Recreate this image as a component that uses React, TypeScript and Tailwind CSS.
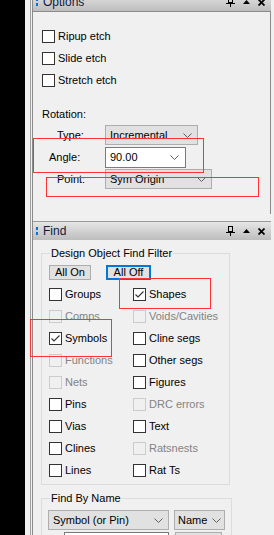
import React from 'react';

const font = { fontFamily: '"Liberation Sans", Arial, sans-serif' };

const Chevron = () => (
  <svg width="9" height="5" viewBox="0 0 9 5" className="shrink-0">
    <polyline points="0.5,0.5 4.5,4.5 8.5,0.5" fill="none" stroke="#606060" strokeWidth="1" />
  </svg>
);

const CheckBox = ({ label, checked, disabled }: { label: string; checked?: boolean; disabled?: boolean }) => (
  <div className="flex items-center h-[22px]">
    <span
      className={`w-[13px] h-[13px] border flex items-center justify-center shrink-0 ${
        disabled ? 'border-[#cccccc] bg-[#f0f0f0]' : 'border-[#333333] bg-white'
      }`}
    >
      {checked && (
        <svg width="11" height="11" viewBox="0 0 11 11">
          <polyline points="1.5,5.5 4,8 9.5,2.5" fill="none" stroke="#333333" strokeWidth="1.1" />
        </svg>
      )}
    </span>
    <span className={`ml-[3px] text-[11px] ${disabled ? 'text-[#838383]' : 'text-black'}`}>{label}</span>
  </div>
);

const Dropdown = ({ text, width }: { text: string; width: string }) => (
  <div className={`${width} h-[20px] shrink-0 bg-[#e1e1e1] border border-[#adadad] flex items-center justify-between pl-[4px] pr-[5px] text-[11px] text-black`}>
    <span>{text}</span>
    <Chevron />
  </div>
);

const TitleBar = ({ title, options }: { title: string; options?: boolean }) => (
  <div
    className={`h-[19px] w-[238px] shrink-0 border-t border-[#9a9a9a] bg-gradient-to-b from-[#e6e6e6] to-[#bdbdbd] flex items-center pl-[3px] pr-[6px] ${
      options ? '-mt-[8px]' : 'mt-[7px]'
    }`}
  >
    <div className="flex flex-col gap-[2px] mr-[5px]">
      <span className="w-[2px] h-[3px] bg-[#0a6fd8]" />
      <span className="w-[2px] h-[3px] bg-[#0a6fd8]" />
    </div>
    <span className="text-[12px] text-[#101a40] flex-1">{title}</span>
    <div className="flex items-center gap-[8px]">
      <svg width="9" height="10" viewBox="0 0 9 10">
        <rect x="2.5" y="0.5" width="4" height="5" fill="none" stroke="#000" />
        <line x1="0" y1="6.5" x2="9" y2="6.5" stroke="#000" />
        <line x1="4.5" y1="6.5" x2="4.5" y2="10" stroke="#000" />
      </svg>
      <svg width="7" height="5" viewBox="0 0 7 5">
        <polygon points="3.5,0 7,4 0,4" fill="#000" />
      </svg>
      <svg width="7" height="7" viewBox="0 0 7 7">
        <path d="M0.5 0.5 L6.5 6.5 M6.5 0.5 L0.5 6.5" stroke="#000" strokeWidth="1.8" />
      </svg>
    </div>
  </div>
);

const RedBox = ({ cls }: { cls: string }) => <div className={`absolute border border-[#ff3333] ${cls}`} />;

export default function App() {
  return (
    <div className="relative w-[274px] h-[535px] overflow-hidden flex bg-[#f0f0f0]" style={font}>
      <div className="w-[25px] bg-black shrink-0" />
      <div className="w-[5px] shrink-0" />
      <div className="border-l border-[#a0a0a0] pl-[1px] shrink-0">
        <div className="border-l border-[#8a8a8a] h-full w-[242px] flex flex-col">
          {/* Options panel */}
          <TitleBar title="Options" options />
          <div className="h-[203px] w-[238px] shrink-0 border-t border-r border-[#8a8a8a] pl-[9px] pt-[13px]">
            <CheckBox label="Ripup etch" />
            <CheckBox label="Slide etch" />
            <CheckBox label="Stretch etch" />
            <div className="text-[11px] mt-[16px] h-[14px] leading-[14px]">Rotation:</div>
            <div className="mt-[4px] flex flex-col gap-[2px]">
              <div className="flex items-center h-[20px]">
                <span className="w-[63px] pl-[15px] text-[11px]">Type:</span>
                <Dropdown text="Incremental" width="w-[93px]" />
              </div>
              <div className="flex items-center h-[20px]">
                <span className="w-[63px] pl-[7px] text-[11px]">Angle:</span>
                <div className="w-[81px] h-[21px] bg-white border border-[#7a7a7a] flex items-center justify-between pl-[4px] pr-[6px] text-[11px]">
                  <span>90.00</span>
                  <Chevron />
                </div>
              </div>
              <div className="flex items-center h-[20px]">
                <span className="w-[63px] pl-[15px] text-[11px]">Point:</span>
                <Dropdown text="Sym Origin" width="w-[107px]" />
              </div>
            </div>
          </div>

          {/* Find panel */}
          <TitleBar title="Find" />
          <div className="pl-[8px] pt-[7px] shrink-0">
            <fieldset className="w-[189px] border border-[#dcdcdc] px-[7px] pb-[3px]">
              <legend className="ml-[1px] px-[1px] text-[11px] leading-[13px]">Design Object Find Filter</legend>
              <div className="flex gap-[15px] mt-[5px]">
                <button className="w-[42px] h-[15px] bg-[#e1e1e1] border border-[#adadad] text-[11px] leading-[13px]">All On</button>
                <button className="w-[45px] h-[15px] bg-[#e1e1e1] border-2 border-[#0078d7] text-[11px] leading-[11px]">All Off</button>
              </div>
              <div className="grid grid-cols-[84px_1fr] mt-[3px]">
                <CheckBox label="Groups" />
                <CheckBox label="Shapes" checked />
                <CheckBox label="Comps" disabled />
                <CheckBox label="Voids/Cavities" disabled />
                <CheckBox label="Symbols" checked />
                <CheckBox label="Cline segs" />
                <CheckBox label="Functions" disabled />
                <CheckBox label="Other segs" />
                <CheckBox label="Nets" disabled />
                <CheckBox label="Figures" />
                <CheckBox label="Pins" />
                <CheckBox label="DRC errors" disabled />
                <CheckBox label="Vias" />
                <CheckBox label="Text" />
                <CheckBox label="Clines" />
                <CheckBox label="Ratsnests" disabled />
                <CheckBox label="Lines" />
                <CheckBox label="Rat Ts" />
              </div>
            </fieldset>
            <fieldset className="mt-[7px] w-[189px] border border-[#dcdcdc] px-[6px] pb-[4px]">
              <legend className="ml-[2px] px-[1px] text-[11px] leading-[13px]">Find By Name</legend>
              <div className="flex gap-[5px] mt-[5px]">
                <Dropdown text="Symbol (or Pin)" width="w-[121px]" />
                <div className="w-[51px] h-[20px] shrink-0 bg-[#e1e1e1] border border-[#adadad] flex items-center justify-between pl-[3px] pr-[3px] text-[11px]">
                  <span>Name</span>
                  <Chevron />
                </div>
              </div>
              <div className="flex items-center mt-[2px]">
                <span className="w-[16px] text-[11px]">Lo</span>
                <div className="w-[105px] h-[20px] bg-white border border-[#7a7a7a]" />
                <button className="ml-[6px] w-[47px] h-[20px] bg-[#e1e1e1] border border-[#adadad] text-[11px]">More...</button>
              </div>
            </fieldset>
          </div>
        </div>
      </div>

      {/* annotation boxes */}
      <RedBox cls="left-[33px] top-[138px] w-[171px] h-[35px]" />
      <RedBox cls="left-[46px] top-[177px] w-[213px] h-[20px]" />
      <RedBox cls="left-[119px] top-[278px] w-[92px] h-[31px]" />
      <RedBox cls="left-[30px] top-[319px] w-[82px] h-[38px]" />
    </div>
  );
}
